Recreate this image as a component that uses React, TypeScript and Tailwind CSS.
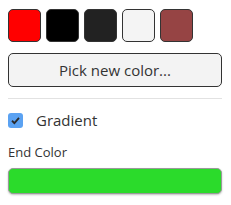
import { useState } from "react";

const swatches = ["#ff0000", "#000000", "#222222", "#f4f4f4", "#964444"];

export default function App() {
  const [gradient, setGradient] = useState(true);

  return (
    <div className="w-[231px] h-[205px] bg-white px-2 pt-[9px] text-[#333] font-['Open_Sans',sans-serif]">
      <div className="flex gap-[5px]">
        {swatches.map((c) => (
          <button
            key={c}
            className="w-[33px] h-[33px] rounded-[5px] border border-[#333]"
            style={{ backgroundColor: c }}
          />
        ))}
      </div>

      <button className="mt-[11px] w-[214px] h-[34px] rounded-[5px] border border-[#333] bg-[#f3f3f3] text-[15px] text-[#333]">
        Pick new color...
      </button>

      <div className="mt-[11px] h-px w-[214px] bg-[#e2e2e2]" />

      <label className="mt-[13px] flex items-center h-[16px] cursor-pointer" onClick={() => setGradient(!gradient)}>
        <span
          className={`w-[15px] h-[15px] rounded-[3px] flex items-center justify-center ${
            gradient ? "bg-[#5ba2f2]" : "border border-[#777] bg-white"
          }`}
        >
          {gradient && (
            <svg width="11" height="11" viewBox="0 0 12 12">
              <path d="M2.2 6.3 L4.8 8.8 L9.8 3.2" fill="none" stroke="#2a2a2a" strokeWidth="2" />
            </svg>
          )}
        </span>
        <span className="ml-[13px] text-[15px] leading-none">Gradient</span>
      </label>

      <div className="mt-[16px] text-[13px] leading-[16px] text-[#333]">End Color</div>

      <div className="mt-[8px] w-[214px] h-[26px] rounded-[5px] border border-[#999] bg-[#2bdb2b] shadow-[0_1px_2px_rgba(0,0,0,0.25)]" />
    </div>
  );
}
